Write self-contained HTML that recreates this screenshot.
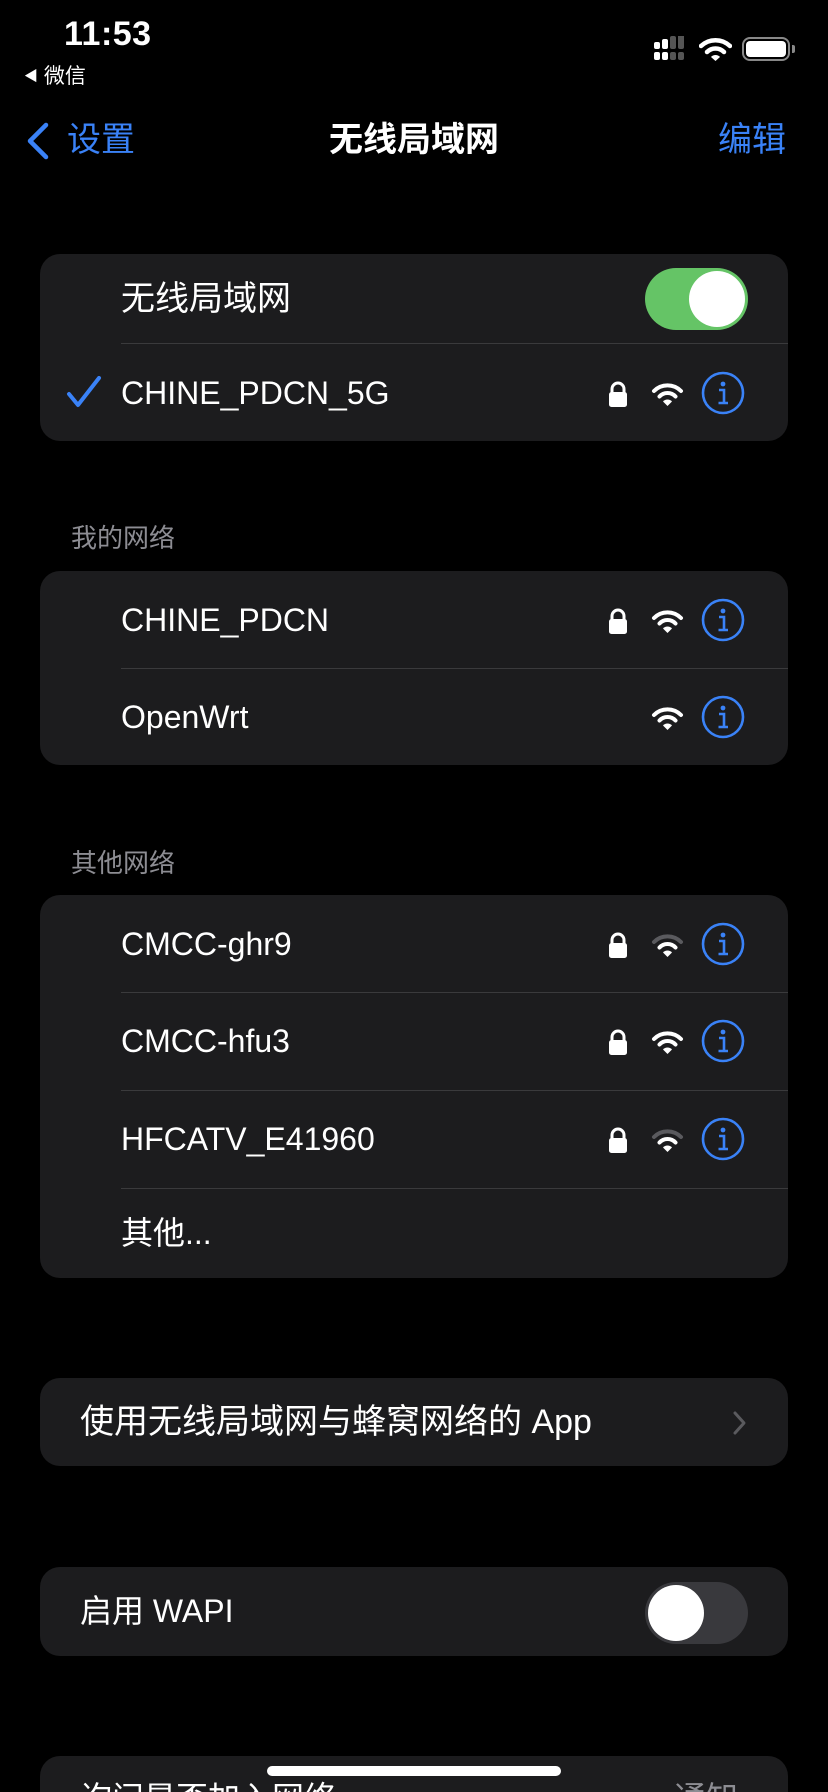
<!DOCTYPE html>
<html style="height:1792px;overflow:hidden"><head><meta charset="utf-8"><style>
*{margin:0;padding:0;box-sizing:border-box}
body{width:828px;height:1792px;background:#000;font-family:"Liberation Sans","Noto Sans CJK SC",sans-serif;color:#fff;position:relative;overflow:hidden}
.a{position:absolute}
.card{position:absolute;left:40px;width:748px;background:#1c1c1e;border-radius:20px;overflow:hidden}
.row{position:absolute;left:0;right:0;font-size:32px;line-height:40px}
.row .t{position:absolute;left:81px}
.sep{position:absolute;left:81px;right:0;height:1px;background:#3a3a3c}
.hdr{position:absolute;left:71px;font-size:26px;color:#8d8d93;line-height:30px}
.lock{position:absolute;left:568px;top:8px}
.wifi{position:absolute;left:611px;top:9px}
.info{position:absolute;left:661px;top:-2px}
</style></head><body>
<div class="a" style="left:64px;top:15px;font-size:34px;font-weight:bold;letter-spacing:0.5px">11:53</div>
<div class="a" style="left:24px;top:62px;font-size:21px;line-height:28px"><span style="font-size:14px;vertical-align:2px">◀</span> 微信</div>
<svg class="a" style="left:654px;top:36px" width="36" height="27">
<rect x="0" y="6" width="6" height="7" rx="2" fill="#fff"/><rect x="8" y="3" width="6" height="10" rx="2" fill="#fff"/><rect x="16" y="0" width="6" height="13" rx="2" fill="#555"/><rect x="24" y="-3" width="6" height="16" rx="2" fill="#555"/>
<rect x="0" y="16" width="6" height="8" rx="2" fill="#fff"/><rect x="8" y="16" width="6" height="8" rx="2" fill="#fff"/><rect x="16" y="16" width="6" height="8" rx="2" fill="#555"/><rect x="24" y="16" width="6" height="8" rx="2" fill="#555"/>
</svg>
<svg class="a" style="left:699px;top:37px" width="33" height="24" viewBox="0 0 33 24">
<path d="M2 9 A21 21 0 0 1 31 9" stroke="#fff" stroke-width="4.5" fill="none" stroke-linecap="round"/>
<path d="M8 15 A12 12 0 0 1 25 15" stroke="#fff" stroke-width="4.5" fill="none" stroke-linecap="round"/>
<path d="M12 20 L16.5 24 L21 20 A6 6 0 0 0 12 20Z" fill="#fff"/>
</svg>
<div class="a" style="left:742px;top:37px;width:48px;height:24px;border:2.5px solid #888;border-radius:8px;padding:2px"><div style="width:100%;height:100%;background:#fff;border-radius:4px"></div></div>
<div class="a" style="left:792px;top:45px;width:3px;height:8px;background:#888;border-radius:0 2px 2px 0"></div>

<svg class="a" style="left:25px;top:122px" width="26" height="38"><path d="M21 3 L5 19 L21 35" stroke="#3a82f7" stroke-width="4.5" fill="none" stroke-linecap="round" stroke-linejoin="round"/></svg>
<div class="a" style="left:67px;top:120px;font-size:34px;color:#3a82f7;line-height:40px">设置</div>
<div class="a" style="left:0;width:828px;text-align:center;top:120px;font-size:34px;font-weight:bold;line-height:40px">无线局域网</div>
<div class="a" style="right:42px;top:120px;font-size:34px;color:#3a82f7;line-height:40px">编辑</div>

<svg width="0" height="0" style="position:absolute">
<defs>
<g id="lk"><path d="M4 12 V8 A6 6 0 0 1 16 8 V12" stroke="#fff" stroke-width="3" fill="none"/><rect x="1" y="11" width="18" height="15" rx="2.5" fill="#fff"/></g>
<g id="info"><circle cx="22" cy="22" r="20" stroke="#3a82f7" stroke-width="2.6" fill="none"/><circle cx="22" cy="13" r="2.4" fill="#3a82f7"/><path d="M18 19 H23 V32 M17.5 32 H27" stroke="#3a82f7" stroke-width="2.6" fill="none"/></g>
</defs></svg>

<div class="card" style="top:254px;height:187px">
 <div class="row" style="top:25px;font-size:34px"><span class="t">无线局域网</span></div>
 <div class="a" style="left:605px;top:14px;width:103px;height:62px;border-radius:31px;background:#65c466"><div class="a" style="right:3px;top:3px;width:56px;height:56px;border-radius:50%;background:#fff"></div></div>
 <div class="sep" style="top:89px"></div>
 <svg class="a" style="left:26px;top:122px" width="36" height="32"><path d="M3 18 L12 29 L33 2" stroke="#3a82f7" stroke-width="4" fill="none" stroke-linecap="round" stroke-linejoin="round"/></svg>
 <div class="row" style="top:119px"><span class="t">CHINE_PDCN_5G</span>
  <svg class="lock" width="20" height="27"><use href="#lk"/></svg>
  <svg class="wifi" width="33" height="24" viewBox="0 0 33 24"><path d="M3 9 A19 19 0 0 1 30 9" stroke="#fff" stroke-width="4" fill="none" stroke-linecap="round"/><path d="M8.5 14.5 A11 11 0 0 1 24.5 14.5" stroke="#fff" stroke-width="4" fill="none" stroke-linecap="round"/><path d="M12 19.5 L16.5 24 L21 19.5 A6 6 0 0 0 12 19.5Z" fill="#fff"/></svg>
  <svg class="info" width="44" height="44"><use href="#info"/></svg></div>
</div>

<div class="hdr" style="top:523px">我的网络</div>
<div class="card" style="top:571px;height:194px">
 <div class="row" style="top:29px"><span class="t">CHINE_PDCN</span>
  <svg class="lock" width="20" height="27"><use href="#lk"/></svg>
  <svg class="wifi" width="33" height="24" viewBox="0 0 33 24"><path d="M3 9 A19 19 0 0 1 30 9" stroke="#fff" stroke-width="4" fill="none" stroke-linecap="round"/><path d="M8.5 14.5 A11 11 0 0 1 24.5 14.5" stroke="#fff" stroke-width="4" fill="none" stroke-linecap="round"/><path d="M12 19.5 L16.5 24 L21 19.5 A6 6 0 0 0 12 19.5Z" fill="#fff"/></svg>
  <svg class="info" width="44" height="44"><use href="#info"/></svg></div>
 <div class="sep" style="top:97px"></div>
 <div class="row" style="top:126px"><span class="t">OpenWrt</span>
  <svg class="wifi" width="33" height="24" viewBox="0 0 33 24"><path d="M3 9 A19 19 0 0 1 30 9" stroke="#fff" stroke-width="4" fill="none" stroke-linecap="round"/><path d="M8.5 14.5 A11 11 0 0 1 24.5 14.5" stroke="#fff" stroke-width="4" fill="none" stroke-linecap="round"/><path d="M12 19.5 L16.5 24 L21 19.5 A6 6 0 0 0 12 19.5Z" fill="#fff"/></svg>
  <svg class="info" width="44" height="44"><use href="#info"/></svg></div>
</div>

<div class="hdr" style="top:848px">其他网络</div>
<div class="card" style="top:895px;height:383px">
 <div class="row" style="top:29px"><span class="t">CMCC-ghr9</span>
  <svg class="lock" width="20" height="27"><use href="#lk"/></svg>
  <svg class="wifi" width="33" height="24" viewBox="0 0 33 24"><path d="M3 9 A19 19 0 0 1 30 9" stroke="#5a5a5e" stroke-width="4" fill="none" stroke-linecap="round"/><path d="M8.5 14.5 A11 11 0 0 1 24.5 14.5" stroke="#fff" stroke-width="4" fill="none" stroke-linecap="round"/><path d="M12 19.5 L16.5 24 L21 19.5 A6 6 0 0 0 12 19.5Z" fill="#fff"/></svg>
  <svg class="info" width="44" height="44"><use href="#info"/></svg></div>
 <div class="sep" style="top:97px"></div>
 <div class="row" style="top:126px"><span class="t">CMCC-hfu3</span>
  <svg class="lock" width="20" height="27"><use href="#lk"/></svg>
  <svg class="wifi" width="33" height="24" viewBox="0 0 33 24"><path d="M3 9 A19 19 0 0 1 30 9" stroke="#fff" stroke-width="4" fill="none" stroke-linecap="round"/><path d="M8.5 14.5 A11 11 0 0 1 24.5 14.5" stroke="#fff" stroke-width="4" fill="none" stroke-linecap="round"/><path d="M12 19.5 L16.5 24 L21 19.5 A6 6 0 0 0 12 19.5Z" fill="#fff"/></svg>
  <svg class="info" width="44" height="44"><use href="#info"/></svg></div>
 <div class="sep" style="top:195px"></div>
 <div class="row" style="top:224px"><span class="t">HFCATV_E41960</span>
  <svg class="lock" width="20" height="27"><use href="#lk"/></svg>
  <svg class="wifi" width="33" height="24" viewBox="0 0 33 24"><path d="M3 9 A19 19 0 0 1 30 9" stroke="#5a5a5e" stroke-width="4" fill="none" stroke-linecap="round"/><path d="M8.5 14.5 A11 11 0 0 1 24.5 14.5" stroke="#fff" stroke-width="4" fill="none" stroke-linecap="round"/><path d="M12 19.5 L16.5 24 L21 19.5 A6 6 0 0 0 12 19.5Z" fill="#fff"/></svg>
  <svg class="info" width="44" height="44"><use href="#info"/></svg></div>
 <div class="sep" style="top:293px"></div>
 <div class="row" style="top:318px"><span class="t">其他...</span></div>
</div>

<div class="card" style="top:1378px;height:88px">
 <div class="row" style="top:24px;font-size:34px"><span class="t" style="left:40px">使用无线局域网与蜂窝网络的 App</span></div>
 <svg class="a" style="left:692px;top:32px" width="16" height="26"><path d="M3 3 L12 13 L3 23" stroke="#5a5a5e" stroke-width="3" fill="none" stroke-linecap="round" stroke-linejoin="round"/></svg>
</div>

<div class="card" style="top:1567px;height:89px">
 <div class="row" style="top:24px"><span class="t" style="left:40px">启用 WAPI</span></div>
 <div class="a" style="left:605px;top:15px;width:103px;height:62px;border-radius:31px;background:#39393d"><div class="a" style="left:3px;top:3px;width:56px;height:56px;border-radius:50%;background:#fff"></div></div>
</div>

<div class="card" style="top:1756px;height:36px;border-radius:20px 20px 0 0">
 <div class="row" style="top:22px"><span class="t" style="left:40px">询问是否加入网络</span><span class="a" style="right:50px;color:#8d8d93">通知</span></div>
</div>
<div class="a" style="left:267px;top:1766px;width:294px;height:10px;border-radius:5px;background:#fff"></div>
</body></html>
